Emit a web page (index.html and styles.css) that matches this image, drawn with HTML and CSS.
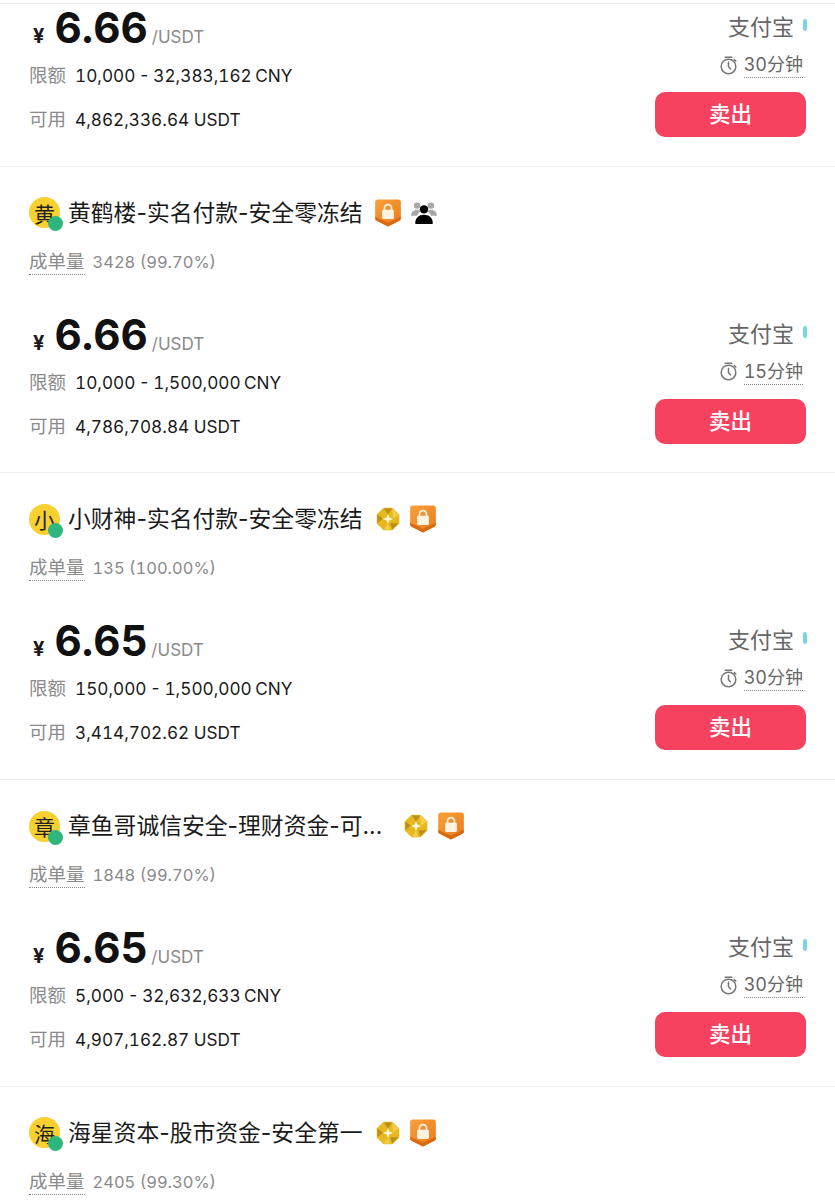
FILE: index.html
```html
<!DOCTYPE html>
<html lang="zh-CN">

<head>
    <meta charset="UTF-8">
    <meta name="viewport" content="width=device-width, initial-scale=1.0">
    <title>P2P</title>
    <link rel="stylesheet" href="styles.css">
</head>

<body>
    <svg class="defs" width="0" height="0">
        <defs>
            <linearGradient id="shieldFill" x1="0" y1="0" x2="1" y2="1">
                <stop offset="0" stop-color="#f8a03c" />
                <stop offset="1" stop-color="#ea7c1c" />
            </linearGradient>
            <symbol id="shield" viewBox="0 0 28 28">
                <path d="M4.5 1.5h19a2.5 2.5 0 0 1 2.5 2.5v15c0 1-.5 1.700-1.400 2.200L14 26.500 3.400 21.200C2.500 20.700 2 20 2 19V4a2.500 2.500 0 0 1 2.500-2.500z" fill="url(#shieldFill)" />
                <path d="M2 17.500 14 23l12-5.500V19c0 1-.5 1.700-1.400 2.200L14 26.500 3.400 21.200C2.500 20.700 2 20 2 19z" fill="#d96a12" />
                <rect x="8.500" y="11" width="11" height="8.500" rx="1.200" fill="#fff3e2" />
                <path d="M10.700 11.500V9.500a3.300 3.300 0 0 1 6.600 0v2" fill="none" stroke="#fff3e2" stroke-width="1.600" />
            </symbol>
            <symbol id="gem" viewBox="0 0 26 26">
                <path d="M8.500 1.500h9l7 7v9l-7 7h-9l-7-7v-9z" fill="#e8b81f" stroke="#e8b81f" stroke-width="1.500" stroke-linejoin="round" />
                <path d="M8.500 1.500h9L13 8zM24.500 17.500l-7 7-2-7zM1.500 8.500l6 4-6 5z" fill="#b98f1c" />
                <path d="M17.500 1.500l7 7-6 4zM8.500 24.500h7l-2.500-6z" fill="#f5cf4c" />
                <path d="M13 7.500l1.500 4 4 1.500-4 1.500-1.500 4-1.500-4-4-1.500 4-1.500z" fill="#fff6d6" />
            </symbol>
            <symbol id="people" viewBox="0 0 28 26">
                <circle cx="6.500" cy="5" r="3.500" fill="#a8a8a8" />
                <circle cx="21.500" cy="5" r="3.500" fill="#a8a8a8" />
                <path d="M0 16c0-4 3-6.500 6.500-6.500 2 0 3.500.8 4.500 2C8.500 12.500 7 14 6.500 16zM28 16c0-4-3-6.500-6.500-6.500-2 0-3.500.8-4.500 2 2.500 1 4 2.500 4.500 4.500z" fill="#a8a8a8" />
                <circle cx="14" cy="9" r="4.500" fill="#000" />
                <path d="M5.500 25c-.8 0-1-.6-1-1.200 0-5 4-8.800 9.500-8.800s9.500 3.800 9.500 8.800c0 .6-.2 1.200-1 1.200z" fill="#000" />
            </symbol>
            <symbol id="timer" viewBox="0 0 20 20">
                <g fill="none" stroke="#777" stroke-width="1.600" stroke-linecap="round">
                    <circle cx="10" cy="11" r="7.700" />
                    <path d="M6.500 1.200h7M10 6.500v4.700l2 2.300" />
                    <path d="M16.200 3.800l1.500 1.500" />
                </g>
            </symbol>
        </defs>
    </svg>

    <main class="list">
        <section class="card card-cut">
            <div class="offer">
                <div class="offer-left">
                    <div class="price"><span class="yen">¥</span><span class="amount">6.66</span><span class="unit">/USDT</span></div>
                    <div class="row row-limit"><span class="label">限额</span>10,000 - 32,383,162 CNY</div>
                    <div class="row row-avail"><span class="label">可用</span>4,862,336.64 USDT</div>
                </div>
                <div class="offer-right">
                    <div class="pay">支付宝<i class="pay-dot"></i></div>
                    <div class="time"><svg class="timer"><use href="#timer" /></svg><span class="time-text">30分钟</span></div>
                    <button class="sell">卖出</button>
                </div>
            </div>
        </section>

        <section class="card">
            <div class="head">
                <div class="avatar">黄<i class="online"></i></div>
                <span class="name">黄鹤楼-实名付款-安全零冻结</span>
                <svg class="badge"><use href="#shield" /></svg>
                <svg class="badge-people"><use href="#people" /></svg>
            </div>
            <div class="stats"><span class="stats-label">成单量</span>3428 (99.70%)</div>
            <div class="offer">
                <div class="offer-left">
                    <div class="price"><span class="yen">¥</span><span class="amount">6.66</span><span class="unit">/USDT</span></div>
                    <div class="row row-limit"><span class="label">限额</span>10,000 - 1,500,000 CNY</div>
                    <div class="row row-avail"><span class="label">可用</span>4,786,708.84 USDT</div>
                </div>
                <div class="offer-right">
                    <div class="pay">支付宝<i class="pay-dot"></i></div>
                    <div class="time"><svg class="timer"><use href="#timer" /></svg><span class="time-text">15分钟</span></div>
                    <button class="sell">卖出</button>
                </div>
            </div>
        </section>

        <section class="card">
            <div class="head">
                <div class="avatar">小<i class="online"></i></div>
                <span class="name">小财神-实名付款-安全零冻结</span>
                <svg class="badge-gem"><use href="#gem" /></svg>
                <svg class="badge"><use href="#shield" /></svg>
            </div>
            <div class="stats"><span class="stats-label">成单量</span>135 (100.00%)</div>
            <div class="offer">
                <div class="offer-left">
                    <div class="price"><span class="yen">¥</span><span class="amount">6.65</span><span class="unit">/USDT</span></div>
                    <div class="row row-limit"><span class="label">限额</span>150,000 - 1,500,000 CNY</div>
                    <div class="row row-avail"><span class="label">可用</span>3,414,702.62 USDT</div>
                </div>
                <div class="offer-right">
                    <div class="pay">支付宝<i class="pay-dot"></i></div>
                    <div class="time"><svg class="timer"><use href="#timer" /></svg><span class="time-text">30分钟</span></div>
                    <button class="sell">卖出</button>
                </div>
            </div>
        </section>

        <section class="card">
            <div class="head">
                <div class="avatar">章<i class="online"></i></div>
                <span class="name name-cut">章鱼哥诚信安全-理财资金-可...</span>
                <svg class="badge-gem"><use href="#gem" /></svg>
                <svg class="badge"><use href="#shield" /></svg>
            </div>
            <div class="stats"><span class="stats-label">成单量</span>1848 (99.70%)</div>
            <div class="offer">
                <div class="offer-left">
                    <div class="price"><span class="yen">¥</span><span class="amount">6.65</span><span class="unit">/USDT</span></div>
                    <div class="row row-limit"><span class="label">限额</span>5,000 - 32,632,633 CNY</div>
                    <div class="row row-avail"><span class="label">可用</span>4,907,162.87 USDT</div>
                </div>
                <div class="offer-right">
                    <div class="pay">支付宝<i class="pay-dot"></i></div>
                    <div class="time"><svg class="timer"><use href="#timer" /></svg><span class="time-text">30分钟</span></div>
                    <button class="sell">卖出</button>
                </div>
            </div>
        </section>

        <section class="card card-last">
            <div class="head">
                <div class="avatar">海<i class="online"></i></div>
                <span class="name">海星资本-股市资金-安全第一</span>
                <svg class="badge-gem"><use href="#gem" /></svg>
                <svg class="badge"><use href="#shield" /></svg>
            </div>
            <div class="stats"><span class="stats-label">成单量</span>2405 (99.30%)</div>
        </section>
    </main>
</body>

</html>
```

FILE: styles.css
```css
html,
body {
    height: 1200px;
    overflow: hidden;
}

body {
    margin: 0;
    background-color: #fff;
    color: #1a1a1a;
    font-family: Inter, "Noto Sans CJK SC", sans-serif;
}

.defs {
    display: block;
    height: 0;
}

.list {
    padding-top: 3px;
}

.card {
    box-sizing: border-box;
    height: 306.75px;
    padding: 0 29px;
    border-top: 1px solid #efefef;
}

.card-cut {
    height: 162.5px;
}

.card-cut .offer {
    margin-top: -1px;
}

.card-last {
    height: 108px;
}

.head {
    display: flex;
    align-items: center;
    height: 32px;
    margin-top: 30px;
}

.avatar {
    position: relative;
    display: flex;
    align-items: center;
    justify-content: center;
    flex: none;
    width: 31px;
    height: 31px;
    border-radius: 50%;
    background-color: #f8d02f;
    color: #222;
    font-size: 21px;
}

.online {
    position: absolute;
    right: -3px;
    bottom: -3px;
    width: 15px;
    height: 15px;
    border-radius: 50%;
    background-color: #2fb67f;
}

.name {
    margin-left: 8px;
    padding-bottom: 3px;
    font-size: 22.8px;
    white-space: nowrap;
}

.name-cut {
    margin-right: 9px;
}

.badge {
    flex: none;
    width: 30px;
    height: 30px;
    margin-left: 10px;
}

.badge-gem {
    flex: none;
    width: 24px;
    height: 24px;
    margin-left: 13px;
}

.badge-gem + .badge {
    margin-left: 8px;
}

.badge-people {
    flex: none;
    width: 26px;
    height: 24px;
    margin-left: 8px;
}

.stats {
    display: flex;
    align-items: center;
    height: 26px;
    margin-top: 20px;
    color: #8a8a8a;
    font-size: 16.5px;
    font-variant-numeric: tabular-nums;
}

.stats-label {
    margin-right: 8px;
    border-bottom: 1px dotted #888;
    font-size: 18.5px;
    line-height: 25px;
}

.offer {
    display: flex;
    justify-content: space-between;
    margin-top: 35px;
}

.price {
    display: flex;
    align-items: baseline;
    height: 50px;
    line-height: 50px;
}

.yen {
    margin-left: 4px;
    font-size: 20px;
    font-weight: 700;
}

.amount {
    margin-left: 10px;
    color: #111;
    font-size: 42px;
    font-weight: 700;
}

.unit {
    margin-left: 4px;
    color: #8a8a8a;
    font-size: 17px;
}

.row {
    height: 26px;
    line-height: 26px;
    font-size: 17.2px;
    font-variant-numeric: tabular-nums;
    white-space: nowrap;
}

.row-limit {
    margin-top: 9px;
    word-spacing: -1.2px;
}

.row-avail {
    margin-top: 18px;
}

.label {
    margin-right: 9px;
    color: #8a8a8a;
    font-size: 18.5px;
}

.offer-right {
    display: flex;
    flex-direction: column;
    align-items: flex-end;
}

.pay {
    display: flex;
    align-items: center;
    height: 30px;
    margin-top: 7px;
    color: #666;
    font-size: 22px;
}

.pay-dot {
    width: 4px;
    height: 12px;
    margin-left: 9px;
    margin-right: -1px;
    border-radius: 2px;
    background-color: #7bd3e8;
}

.time {
    display: flex;
    align-items: center;
    height: 26px;
    margin-top: 12px;
    margin-right: 3px;
    color: #666;
    font-size: 18px;
    font-variant-numeric: tabular-nums;
}

.timer {
    width: 19px;
    height: 19px;
    margin-right: 6px;
}

.time-text {
    min-width: 59px;
    border-bottom: 1px dotted #888;
    line-height: 25px;
}

.sell {
    width: 151px;
    height: 45px;
    margin-top: 14px;
    padding: 0 0 4px;
    border: none;
    border-radius: 10px;
    background-color: #f6425f;
    color: #fff;
    font-family: inherit;
    font-size: 21.5px;
    font-weight: 500;
}
```
